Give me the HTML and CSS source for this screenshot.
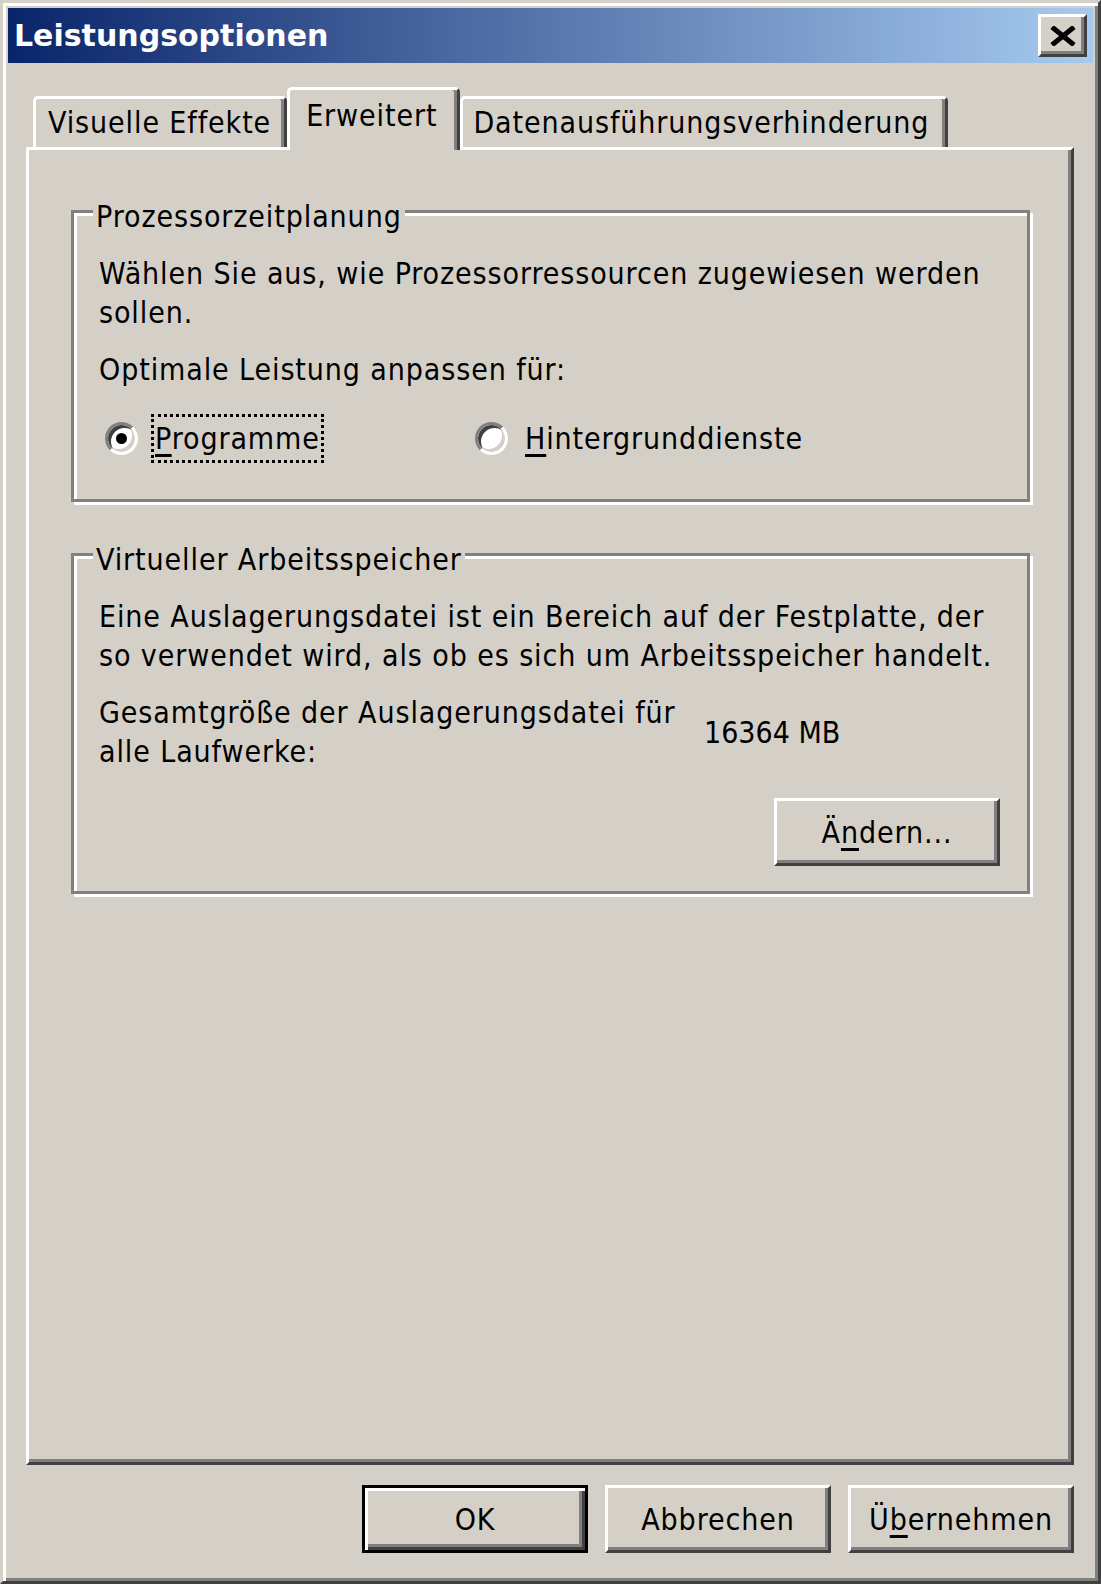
FILE: index.html
```html
<!DOCTYPE html>
<html lang="de">
<head>
    <meta charset="UTF-8">
    <title>Leistungsoptionen</title>
    <link rel="stylesheet" href="styles.css">
</head>
<body>
    <div class="window">
        <div class="titlebar">
            <span class="title">Leistungsoptionen</span>
            <button class="close-btn" aria-label="Schließen">
                <svg width="28" height="20" viewBox="0 0 28 20">
                    <path d="M3 1 L25 19 M25 1 L3 19" stroke="#000" stroke-width="5" fill="none"/>
                </svg>
            </button>
        </div>

        <div class="tabs">
            <div class="tab">Visuelle Effekte</div>
            <div class="tab active">Erweitert</div>
            <div class="tab">Datenausführungsverhinderung</div>
        </div>

        <div class="panel">
            <fieldset class="group">
                <legend>Prozessorzeitplanung</legend>
                <p>Wählen Sie aus, wie Prozessorressourcen zugewiesen werden<br>sollen.</p>
                <p>Optimale Leistung anpassen für:</p>
                <div class="radios">
                    <label class="radio">
                        <span class="radio-dot checked"></span>
                        <span class="radio-text focus"><u>P</u>rogramme</span>
                    </label>
                    <label class="radio">
                        <span class="radio-dot"></span>
                        <span class="radio-text"><u>H</u>intergrunddienste</span>
                    </label>
                </div>
            </fieldset>

            <fieldset class="group">
                <legend>Virtueller Arbeitsspeicher</legend>
                <p>Eine Auslagerungsdatei ist ein Bereich auf der Festplatte, der<br>so verwendet wird, als ob es sich um Arbeitsspeicher handelt.</p>
                <div class="pagefile">
                    <span>Gesamtgröße der Auslagerungsdatei für<br>alle Laufwerke:</span>
                    <span class="pagefile-size">16364 MB</span>
                </div>
                <div class="group-actions">
                    <button class="btn">Ä<u>n</u>dern...</button>
                </div>
            </fieldset>
        </div>

        <div class="footer">
            <button class="btn default">OK</button>
            <button class="btn">Abbrechen</button>
            <button class="btn">Ü<u>b</u>ernehmen</button>
        </div>
    </div>
</body>
</html>
```

FILE: styles.css
```css
body {
    margin: 0;
    background: #d4d0c8;
    font-family: "DejaVu Sans", "Noto Sans", sans-serif;
    font-stretch: condensed;
    font-size: 30px;
    letter-spacing: 0.9px;
    color: #000;
}

/* classic 3D window frame */
.window {
    box-sizing: border-box;
    width: 1101px;
    height: 1584px;
    padding: 5px;
    background: #d4d0c8;
    border: 3px solid;
    border-color: #d4d0c8 #404040 #404040 #d4d0c8;
    box-shadow: inset 3px 3px 0 #fff, inset -3px -3px 0 #808080;
    display: flex;
    flex-direction: column;
}

.titlebar {
    height: 55px;
    flex-shrink: 0;
    padding: 0 6px;
    background: linear-gradient(to right, #0a246a, #a6caf0);
    display: flex;
    align-items: center;
    justify-content: space-between;
}

.title {
    color: #fff;
    font-weight: bold;
    font-stretch: normal;
    letter-spacing: 0;
    font-size: 30px;
}

.close-btn {
    box-sizing: border-box;
    width: 49px;
    height: 43px;
    padding: 0;
    background: #d4d0c8;
    border: 3px solid;
    border-color: #fff #404040 #404040 #fff;
    box-shadow: inset -3px -3px 0 #808080;
    display: flex;
    align-items: center;
    justify-content: center;
}

/* tab strip */
.tabs {
    display: flex;
    align-items: flex-end;
    margin: 24px 0 0 25px;
}

.tab {
    box-sizing: border-box;
    height: 51px;
    padding: 0 13px 0 12px;
    line-height: 48px;
    border: 3px solid;
    border-bottom: none;
    border-color: #fff #404040 #404040 #fff;
    border-radius: 5px 5px 0 0;
    box-shadow: inset -3px 0 0 #808080;
    background: #d4d0c8;
    white-space: nowrap;
}

.tab.active {
    height: 63px;
    margin-bottom: -3px;
    padding: 0 20px 0 16px;
    line-height: 52px;
    position: relative;
    z-index: 1;
}

.tab:last-child {
    padding: 0 16px 0 10px;
}

.panel {
    flex: 1;
    margin: 0 19px 0 18px;
    padding: 0 41px 0 42px;
    border: 3px solid;
    border-color: #fff #404040 #404040 #fff;
    box-shadow: inset -3px -3px 0 #808080;
}

/* etched group boxes */
.group {
    margin: 37px 0 0;
    padding: 18px 25px 36px;
    border: 3px solid #808080;
    box-shadow: inset 3px 3px 0 #fff, 3px 3px 0 #fff;
}

.group + .group {
    margin-top: 28px;
    padding-bottom: 25px;
}

.group legend {
    margin-left: -6px;
    padding: 10px 3px 0;
    line-height: 39px;
    background: #d4d0c8;
}

.group p {
    margin: 0 0 18px;
    line-height: 39px;
}

.radios {
    display: grid;
    grid-template-columns: 370px auto;
    margin-top: 25px;
}

.radio {
    display: flex;
    align-items: center;
}

.radio-dot {
    box-sizing: border-box;
    width: 33px;
    height: 33px;
    margin: 0 13px 0 6px;
    border-radius: 50%;
    background: #fff;
    border: 3px solid;
    border-color: #808080 #fff #fff #808080;
    box-shadow: inset 3px 3px 0 #404040, inset -3px -3px 0 #d4d0c8;
    display: flex;
    align-items: center;
    justify-content: center;
}

.radio-dot.checked::after {
    content: "";
    width: 11px;
    height: 11px;
    border-radius: 50%;
    background: #000;
}

.radio-text {
    padding: 2px 1px;
    line-height: 39px;
    border: 3px solid transparent;
}

.radio-text.focus {
    border: 3px dotted #000;
}

u {
    text-decoration-thickness: 3px;
    text-underline-offset: 5px;
}

.pagefile {
    display: grid;
    grid-template-columns: 605px auto;
    align-items: center;
    line-height: 39px;
}

.pagefile-size {
    letter-spacing: 0;
}

.group-actions {
    display: flex;
    justify-content: flex-end;
    margin-top: 27px;
    padding-right: 2px;
}

/* push buttons */
.btn {
    box-sizing: border-box;
    width: 226px;
    height: 68px;
    padding: 0;
    font: inherit;
    letter-spacing: inherit;
    color: #000;
    background: #d4d0c8;
    border: 3px solid;
    border-color: #fff #404040 #404040 #fff;
    box-shadow: inset -3px -3px 0 #808080;
}

.btn.default {
    border: 3px solid #000;
    box-shadow: inset 3px 3px 0 #fff, inset -3px -3px 0 #404040, inset -6px -6px 0 #808080;
}

.footer {
    display: flex;
    justify-content: flex-end;
    gap: 17px;
    margin: 20px 19px 23px 0;
}
```
